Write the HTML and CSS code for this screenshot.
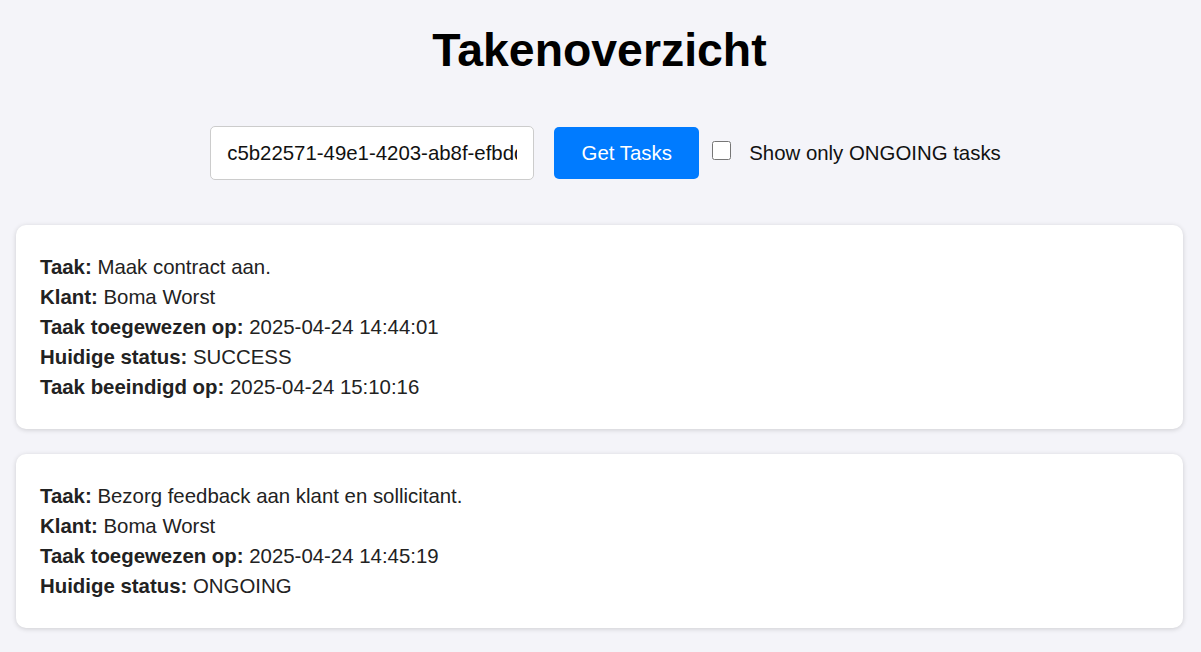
FILE: index.html
```html
<!DOCTYPE html>
<html lang="nl">
<head>
<meta charset="utf-8">
<title>Takenoverzicht</title>
<link rel="stylesheet" href="styles.css">
</head>
<body>
<h1 class="title">Takenoverzicht</h1>
<div class="controls">
  <input class="id-input" type="text" value="c5b22571-49e1-4203-ab8f-efbdd9a1c2d3">
  <button class="btn">Get Tasks</button>
  <label class="filter"><input class="check" type="checkbox"><span class="filter-text">Show only ONGOING tasks</span></label>
</div>
<div class="tasks">
  <div class="card">
    <p class="row"><b>Taak:</b> Maak contract aan.</p>
    <p class="row"><b>Klant:</b> Boma Worst</p>
    <p class="row"><b>Taak toegewezen op:</b> 2025-04-24 14:44:01</p>
    <p class="row"><b>Huidige status:</b> SUCCESS</p>
    <p class="row"><b>Taak beeindigd op:</b> 2025-04-24 15:10:16</p>
  </div>
  <div class="card">
    <p class="row"><b>Taak:</b> Bezorg feedback aan klant en sollicitant.</p>
    <p class="row"><b>Klant:</b> Boma Worst</p>
    <p class="row"><b>Taak toegewezen op:</b> 2025-04-24 14:45:19</p>
    <p class="row"><b>Huidige status:</b> ONGOING</p>
  </div>
</div>
</body>
</html>
```
FILE: styles.css
```css
html, body {
  margin: 0;
  padding: 0;
}
body {
  background: #f4f4f9;
  font-family: "Liberation Sans", Arial, sans-serif;
  font-size: 20.4px;
  color: #222;
  padding: 0 18px 0 16px;
  overflow: hidden;
}
.title {
  margin: 0;
  padding-top: 24px;
  font-size: 46.4px;
  line-height: 53px;
  text-align: center;
  color: #000;
}
.controls {
  margin-top: 49px;
  display: flex;
  justify-content: center;
  align-items: center;
  padding-left: 12px;
}
.id-input {
  box-sizing: border-box;
  width: 324px;
  height: 54px;
  padding: 0 16px;
  border: 1px solid #ccc;
  border-radius: 5px;
  background: #fff;
  font-family: "Liberation Sans", Arial, sans-serif;
  font-size: 20.4px;
  color: #111;
  outline: none;
}
.btn {
  margin-left: 20px;
  width: 145px;
  height: 52px;
  border: none;
  border-radius: 5px;
  background: #007bff;
  color: #fff;
  font-family: "Liberation Sans", Arial, sans-serif;
  font-size: 20.4px;
}
.filter {
  display: flex;
  align-items: center;
  margin-left: 13px;
}
.check {
  margin: 0 0 6px 0;
  width: 19px;
  height: 19px;
}
.filter-text {
  margin-left: 18px;
  color: #111;
}
.tasks {
  margin-top: 45px;
}
.card {
  background: #fff;
  border-radius: 10px;
  box-shadow: 0 1px 5px rgba(0, 0, 0, 0.16);
  padding: 27px 24px;
  margin-bottom: 25px;
}
.row {
  margin: 0;
  line-height: 30px;
}
.row b {
  color: #222;
}
```
